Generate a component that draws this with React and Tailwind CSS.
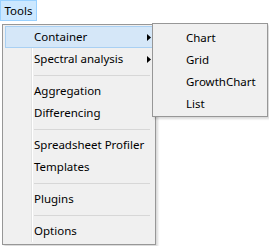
import React from "react";

const mainItems = [
  { label: "Container", sub: true, active: true },
  { label: "Spectral analysis", sub: true },
  { sep: true },
  { label: "Aggregation" },
  { label: "Differencing" },
  { sep: true },
  { label: "Spreadsheet Profiler" },
  { label: "Templates" },
  { sep: true },
  { label: "Plugins" },
  { sep: true },
  { label: "Options" },
];

const subItems = ["Chart", "Grid", "GrowthChart", "List"];

function Arrow() {
  return (
    <svg width="4" height="7" viewBox="0 0 4 7" className="absolute right-[2px] top-[8px]">
      <path d="M0 0 L4 3.5 L0 7 Z" fill="#000" />
    </svg>
  );
}

function MenuRow({ item }) {
  if (item.sep) {
    return (
      <div className="h-[10px] flex items-center pl-[29px] pr-[3px]">
        <div className="w-full h-px bg-[#d7d7d7]" />
      </div>
    );
  }
  return (
    <div
      className={
        "relative h-[22px] flex items-center pl-[29px] " +
        (item.active ? "bg-[#d5e7f8] outline outline-1 outline-[#a9d0f3] -outline-offset-1" : "")
      }
    >
      <span>{item.label}</span>
      {item.sub && <Arrow />}
    </div>
  );
}

export default function App() {
  return (
    <div
      className="relative w-[269px] h-[246px] bg-white overflow-hidden text-[11.5px] text-black"
      style={{ fontFamily: '"Noto Sans", "Open Sans", sans-serif' }}
    >
      {/* menu bar */}
      <div className="h-[22px] flex items-start">
        <div className="h-[21px] w-[37px] flex items-center justify-center bg-[#cce8ff] border border-[#99d1ff]">
          Tools
        </div>
      </div>

      {/* main dropdown */}
      <div className="absolute left-[2px] top-[24px] w-[154px] bg-[#f0f0f0] border border-[#979797] pt-px pb-[2px] px-[2px] shadow-[2px_2px_2px_rgba(0,0,0,0.15)]">
        <div className="absolute left-[28px] top-[2px] bottom-[2px] w-px bg-[#e2e3e3]" />
        <div className="absolute left-[29px] top-[2px] bottom-[2px] w-px bg-white" />
        {mainItems.map((item, i) => (
          <MenuRow key={i} item={item} />
        ))}
      </div>

      {/* submenu */}
      <div className="absolute left-[152px] top-[23px] w-[116px] bg-[#f0f0f0] border border-[#979797] pt-[3px] pb-px px-[2px] shadow-[2px_2px_2px_rgba(0,0,0,0.15)]">
        {subItems.map((s) => (
          <div key={s} className="h-[22px] flex items-center pl-[31px]">
            {s}
          </div>
        ))}
      </div>
    </div>
  );
}
